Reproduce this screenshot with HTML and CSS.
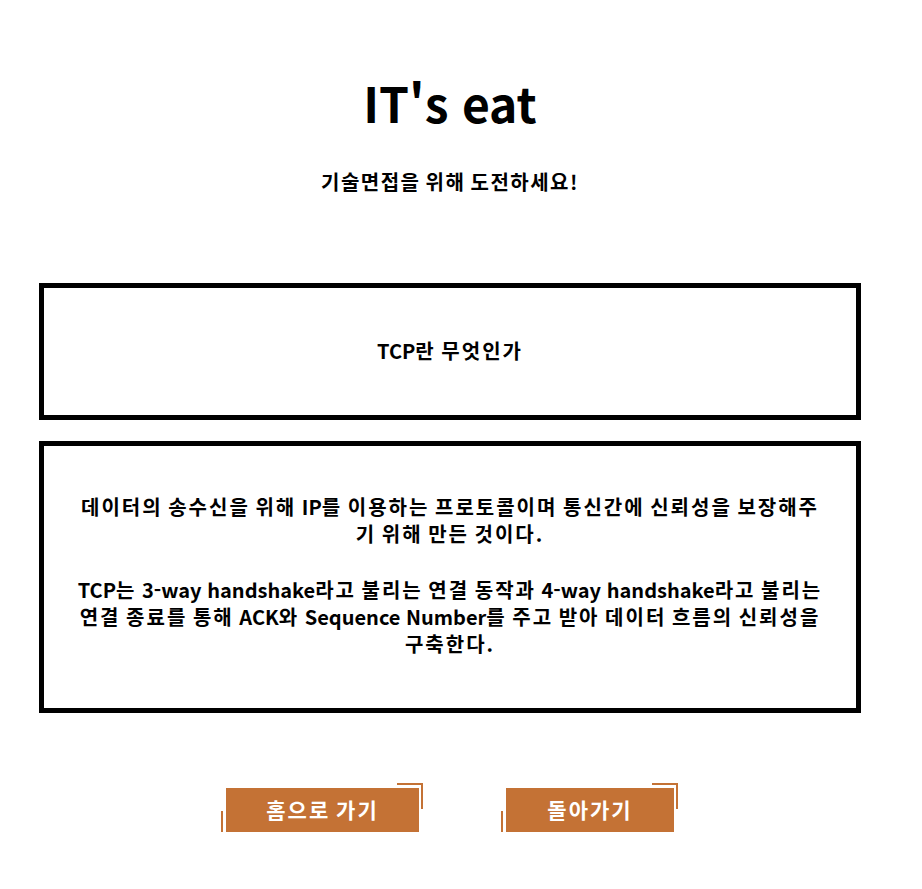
FILE: index.html
```html
<!DOCTYPE html>
<html lang="ko">
<head>
  <meta charset="UTF-8" />
  <meta name="viewport" content="width=device-width, initial-scale=1" />
  <title>IT's eat</title>
  <link rel="stylesheet" href="styles.css">
</head>
<body>

  <div class="page">
    <header>
      <h1>IT's eat</h1>
      <p class="subtitle">기술면접을 위해 도전하세요!</p>
    </header>

    <div class="box question">
      <p><span class="en">TCP</span>란 무엇인가</p>
    </div>

    <div class="box answer">
      <p>데이터의 송수신을 위해 <span class="en">IP</span>를 이용하는 프로토콜이며 통신간에 신뢰성을 보장해주기 위해 만든 것이다.</p>
      <p><span class="en">TCP</span>는 <span class="en">3-way handshake</span>라고 불리는 연결 동작과 <span class="en">4-way handshake</span>라고 불리는 연결 종료를 통해 <span class="en">ACK</span>와 <span class="en">Sequence Number</span>를 주고 받아 데이터 흐름의 신뢰성을 구축한다.</p>
    </div>

    <div class="buttons">
      <a class="btn btn-home" href="#">홈으로 가기</a>
      <a class="btn btn-back" href="#">돌아가기</a>
    </div>
  </div>

</body>
</html>
```

FILE: styles.css
```css
body {
  margin: 0;
  font-family: 'Noto Sans CJK KR', 'Noto Sans', sans-serif;
  background-color: #fff;
  color: #000;
}

.page {
  width: 900px;
}

header {
  text-align: center;
  padding-top: 72px;
}

header h1 {
  font-size: 48px;
  line-height: 60px;
  font-weight: bold;
  margin: 0;
}

.subtitle {
  font-size: 20px;
  line-height: 28px;
  font-weight: bold;
  letter-spacing: 1.5px;
  word-spacing: -2px;
  margin: 36px 0 0;
}

.box {
  margin: 0 39px;
  border: 5px solid #000;
  display: flex;
  flex-direction: column;
  justify-content: center;
  align-items: center;
  text-align: center;
  font-weight: bold;
  font-size: 20px;
  letter-spacing: 2px;
  word-spacing: -2px;
}

.box p {
  margin: 0;
}

/* 영문은 자간 없이 */
.en {
  letter-spacing: 0;
  word-spacing: 0;
}

.question {
  margin-top: 87px;
  height: 137px;
  padding-bottom: 2px;
  box-sizing: border-box;
}

.answer {
  margin-top: 21px;
  height: 272px;
  box-sizing: border-box;
  padding: 0 30px 5px;
  line-height: 27px;
}

.answer p + p {
  margin-top: 29px;
}

.buttons {
  display: flex;
  justify-content: center;
  gap: 87px;
  margin-top: 75px;
}

.btn {
  position: relative;
  display: flex;
  align-items: center;
  justify-content: center;
  height: 44px;
  padding-bottom: 2px;
  box-sizing: border-box;
  background-color: #c47235;
  color: #fff;
  font-size: 21px;
  font-weight: bold;
  letter-spacing: 2px;
  word-spacing: -2px;
  text-decoration: none;
}

.btn-home {
  width: 193px;
}

.btn-back {
  width: 168px;
}

.btn::before,
.btn::after {
  content: "";
  position: absolute;
  width: 24px;
  height: 24px;
  border: 2px solid #c47235;
}

.btn::before {
  top: -5px;
  right: -4px;
  border-left: none;
  border-bottom: none;
}

.btn::after {
  bottom: -5px;
  left: -5px;
  border-top: none;
  border-right: none;
}
```
